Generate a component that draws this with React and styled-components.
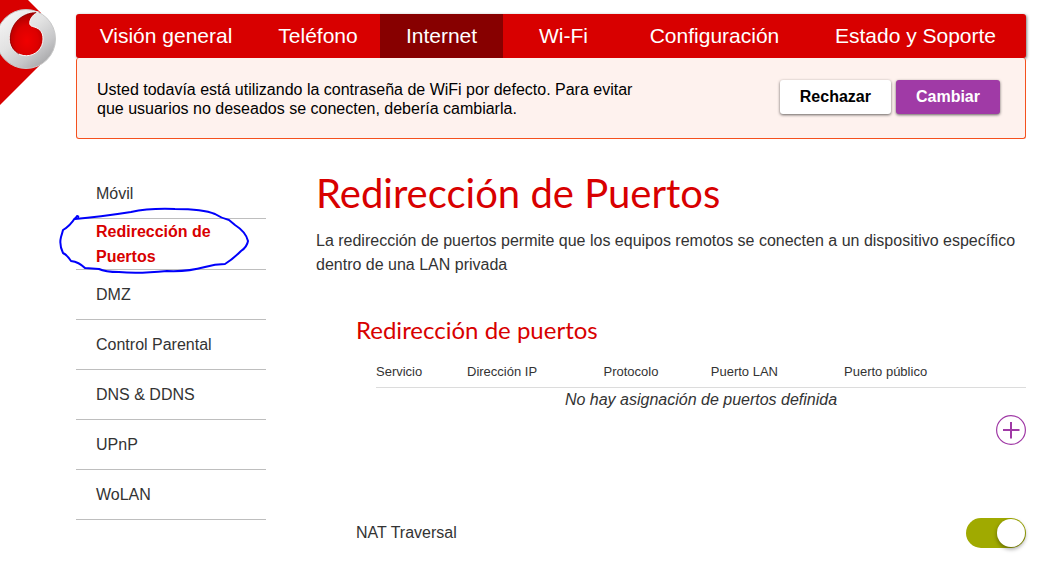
import React, { useState } from "react";
import styled, { createGlobalStyle } from "styled-components";

const GlobalStyle = createGlobalStyle`
  *, *::before, *::after { box-sizing: border-box; }
  body {
    margin: 0;
    background: #fff;
    color: #333;
    font: 16px/24px "Liberation Sans", Arial, sans-serif;
  }
`;

const Page = styled.div`
  position: relative;
  padding: 14px 17px 32px 76px;
`;

const Logo = styled.svg`
  position: absolute;
  top: 0;
  left: 0;
  width: 60px;
  height: 106px;
`;

const MainNav = styled.nav`
  display: grid;
  grid-template-columns: 180fr 124fr 123fr 121fr 181fr 221fr;
  border-radius: 3px;
  overflow: hidden;
  background: #d80000;
  box-shadow: 1px 1px 3px rgba(0, 0, 0, 0.5);
`;

const NavLink = styled.a`
  background: ${(p) => (p.$active ? "#870000" : "transparent")};
  color: #fff;
  font-size: 21px;
  line-height: 44px;
  text-align: center;
  text-decoration: none;
  white-space: nowrap;
`;

const Notice = styled.section`
  position: relative;
  display: flex;
  align-items: flex-start;
  justify-content: space-between;
  padding: 21px 25px 20px 20px;
  border: 1px solid #f4511e;
  border-top: 0;
  border-radius: 3px;
  background: #fef2ee;
  color: #000;
`;

const NoticeText = styled.p`
  max-width: 560px;
  margin: 0;
  padding-top: 1px;
  line-height: 19px;
`;

const Actions = styled.div`
  display: flex;
  gap: 5px;
  padding-top: 1px;
`;

const Button = styled.button`
  height: 34px;
  padding: 0 20px;
  border: 0;
  border-radius: 3px;
  background: ${(p) => (p.$primary ? "#a03aa6" : "#fff")};
  color: ${(p) => (p.$primary ? "#fff" : "#000")};
  font: bold 16px "Liberation Sans", Arial, sans-serif;
  box-shadow: 0 1px 3px rgba(0, 0, 0, 0.6);
  cursor: pointer;
`;

const Columns = styled.div`
  display: grid;
  grid-template-columns: 190px minmax(0, 1fr);
  gap: 50px;
  padding-top: 30px;
`;

const SideList = styled.ul`
  margin: 0;
  padding: 0;
  list-style: none;
`;

const SideItem = styled.li`
  position: relative;
  border-bottom: 1px solid #bebebe;
`;

const SideLink = styled.a`
  display: flex;
  align-items: center;
  min-height: 49px;
  padding: 0 40px 0 20px;
  color: ${(p) => (p.$active ? "#d80000" : "#333")};
  font-weight: ${(p) => (p.$active ? "bold" : "normal")};
  line-height: 25px;
  text-decoration: none;
`;

const PenCircle = styled.svg`
  position: absolute;
  top: -14px;
  left: -19px;
  width: 196px;
  height: 70px;
  pointer-events: none;
`;

const Title = styled.h1`
  margin: 0 0 12px;
  color: #d80000;
  font: 400 40px/48px Lato, "Noto Sans", sans-serif;
`;

const Intro = styled.p`
  margin: 0;
`;

const Section = styled.section`
  padding: 37px 0 0 40px;
`;

const SectionTitle = styled.h2`
  margin: 0;
  color: #d80000;
  font: 400 24px/32px Lato, "Noto Sans", sans-serif;
`;

const TableWrap = styled.div`
  padding: 12px 0 0 20px;
`;

const PortTable = styled.table`
  width: 100%;
  border-collapse: collapse;
  table-layout: fixed;
`;

const HeadCell = styled.th`
  width: ${(p) => p.$width};
  padding: 1px 0 2px;
  border-bottom: 1px solid #dcdcdc;
  font-size: 13px;
  font-weight: normal;
  line-height: 26px;
  text-align: left;
`;

const EmptyCell = styled.td`
  padding: 0;
  font-style: italic;
  text-align: center;
`;

const AddRow = styled.div`
  display: flex;
  justify-content: flex-end;
  padding-top: 3px;
`;

const AddButton = styled.button`
  width: 30px;
  height: 30px;
  padding: 0;
  border: 0;
  background: none;
  cursor: pointer;

  svg { display: block; }
`;

const SwitchRow = styled.div`
  display: flex;
  align-items: center;
  justify-content: space-between;
  padding-top: 73px;
`;

const Switch = styled.input`
  appearance: none;
  width: 60px;
  height: 30px;
  margin: 0;
  padding: 1px;
  border-radius: 15px;
  background: ${(p) => (p.checked ? "#a0aa00" : "#999")};
  cursor: pointer;

  &::before {
    content: "";
    display: block;
    width: 28px;
    height: 28px;
    margin-left: ${(p) => (p.checked ? "30px" : "0")};
    border-radius: 50%;
    background: #fff;
    box-shadow: 0 2px 4px rgba(0, 0, 0, 0.4);
  }
`;

const navItems = ["Visión general", "Teléfono", "Internet", "Wi-Fi", "Configuración", "Estado y Soporte"];
const sideItems = ["Móvil", "Redirección de Puertos", "DMZ", "Control Parental", "DNS & DDNS", "UPnP", "WoLAN"];
const columns = [
  ["Servicio", "14%"],
  ["Dirección IP", "21%"],
  ["Protocolo", "16.5%"],
  ["Puerto LAN", "20.5%"],
  ["Puerto público", "28%"],
];

function VodafoneLogo() {
  return (
    <Logo viewBox="0 0 60 106" role="img" aria-label="Vodafone">
      <defs>
        <linearGradient id="silver" x1="0.2" y1="0.1" x2="0.85" y2="0.9">
          <stop offset="0" stopColor="#f2f2f2" />
          <stop offset="0.4" stopColor="#e2e2e2" />
          <stop offset="0.75" stopColor="#c6c6c8" />
          <stop offset="1" stopColor="#a8a8aa" />
        </linearGradient>
        <radialGradient id="drop" cx="0.52" cy="0.66" r="0.62">
          <stop offset="0" stopColor="#f00000" />
          <stop offset="0.55" stopColor="#dc0000" />
          <stop offset="1" stopColor="#a80000" />
        </radialGradient>
      </defs>
      <path d="M0 0H28L41 13L45 60L0 105Z" fill="#d80000" />
      <circle cx="26" cy="39" r="29.5" fill="url(#silver)" stroke="#c8c8c8" />
      <path
        d="M38.500 12C23 11 9.500 23 9.500 39.500A16.750 16.500 0 0 0 43 39C43 31 39 28 32.500 26.500C30.500 26 29.500 24.500 29.700 22.500C30.200 18 34 13.500 38.500 12Z"
        fill="url(#drop)"
        stroke="#fafafa"
        strokeWidth="1"
      />
      <path d="M36 12.700C23 12.500 10.300 23 10.300 39C10.300 46 14 51 19 54" fill="none" stroke="#8a0000" strokeWidth="0.8" />
    </Logo>
  );
}

export default function App() {
  const [nat, setNat] = useState(true);
  return (
    <>
      <GlobalStyle />
      <Page>
        <VodafoneLogo />
        <MainNav>
          {navItems.map((item) => (
            <NavLink key={item} href="#" $active={item === "Internet"}>{item}</NavLink>
          ))}
        </MainNav>
        <Notice>
          <NoticeText>
            Usted todavía está utilizando la contraseña de WiFi por defecto. Para evitar que usuarios no
            deseados se conecten, debería cambiarla.
          </NoticeText>
          <Actions>
            <Button type="button">Rechazar</Button>
            <Button type="button" $primary>Cambiar</Button>
          </Actions>
        </Notice>
        <Columns>
          <nav>
            <SideList>
              {sideItems.map((item, i) => (
                <SideItem key={item}>
                  <SideLink href="#" $active={i === 1}>{item}</SideLink>
                  {i === 1 && (
                    <PenCircle viewBox="0 0 196 70" aria-hidden="true">
                      <path
                        d="M22 12L20 11L18 14Q42 12 74 7Q92 3 118 4Q146 4 158 9Q164 13 172 15L178 20Q189 27 191 36Q190 42 184 46Q176 54 168 59Q158 59 148 62Q130 67 110 66Q80 69 62 67Q48 67 42 64L28 63Q22 57 14 56Q10 50 6 48Q2 40 4 32Q5 29 6 25Q13 21 18 13"
                        fill="none"
                        stroke="#0000fb"
                        strokeWidth="2"
                        strokeLinejoin="round"
                      />
                    </PenCircle>
                  )}
                </SideItem>
              ))}
            </SideList>
          </nav>
          <main>
            <Title>Redirección de Puertos</Title>
            <Intro>
              La redirección de puertos permite que los equipos remotos se conecten a un dispositivo
              específico dentro de una LAN privada
            </Intro>
            <Section>
              <SectionTitle>Redirección de puertos</SectionTitle>
              <TableWrap>
                <PortTable>
                  <thead>
                    <tr>
                      {columns.map(([label, width]) => (
                        <HeadCell key={label} scope="col" $width={width}>{label}</HeadCell>
                      ))}
                    </tr>
                  </thead>
                  <tbody>
                    <tr>
                      <EmptyCell colSpan={5}>No hay asignación de puertos definida</EmptyCell>
                    </tr>
                  </tbody>
                </PortTable>
              </TableWrap>
              <AddRow>
                <AddButton type="button" aria-label="Añadir">
                  <svg width="30" height="30" viewBox="0 0 30 30" fill="none" stroke="#a03aa6" aria-hidden="true">
                    <circle cx="15" cy="15" r="14.400" strokeWidth="1.200" />
                    <path d="M15 7V23.500M7 15H23.500" strokeWidth="2" />
                  </svg>
                </AddButton>
              </AddRow>
              <SwitchRow>
                <label htmlFor="nat">NAT Traversal</label>
                <Switch id="nat" type="checkbox" role="switch" checked={nat} onChange={(e) => setNat(e.target.checked)} />
              </SwitchRow>
            </Section>
          </main>
        </Columns>
      </Page>
    </>
  );
}
